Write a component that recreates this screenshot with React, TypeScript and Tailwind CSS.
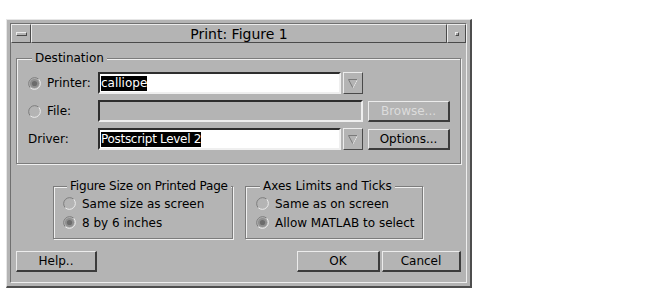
import React from 'react';

const raised =
  'border-t border-l border-t-[#ececec] border-l-[#ececec] border-b-2 border-r-2 border-b-[#3c3c3c] border-r-[#3c3c3c]';
const raisedThin =
  'border border-t-[#ececec] border-l-[#ececec] border-b-[#4a4a4a] border-r-[#4a4a4a]';
const sunken =
  'border-t-2 border-l-2 border-b-2 border-r-2 border-t-[#2e2e2e] border-l-[#2e2e2e] border-b-[#efefef] border-r-[#efefef]';
const etched =
  'border border-[#7c7c7c] shadow-[inset_1px_1px_0_#f0f0f0,1px_1px_0_#f0f0f0]';

function Radio({ checked }: { checked?: boolean }) {
  return (
    <svg width="13" height="13" viewBox="0 0 13 13" className="shrink-0">
      <path d="M2.26 10.74 A6 6 0 0 1 10.74 2.26" fill="none" stroke="#7d7d7d" />
      <path d="M10.74 2.26 A6 6 0 0 1 2.26 10.74" fill="none" stroke="#ececec" />
      {checked && (
        <>
          <circle cx="6.5" cy="6.5" r="4.6" fill="#8f8f8f" />
          <circle cx="6.5" cy="6.5" r="2.6" fill="#6c6c6c" />
        </>
      )}
    </svg>
  );
}

function DropButton() {
  return (
    <div className={`w-[20px] h-[22px] ${raisedThin} flex items-center justify-center shrink-0`}>
      <svg width="12" height="11" viewBox="0 0 12 11">
        <path d="M10.5 1.5 L6 10 L1.5 1.5 Z" fill="none" stroke="#7a7a7a" />
        <path d="M10.5 1.5 L6 10" fill="none" stroke="#eeeeee" />
      </svg>
    </div>
  );
}

function Button({ label, w, disabled }: { label: string; w: string; disabled?: boolean }) {
  return (
    <div
      className={`${w} h-[21px] ${raised} flex items-center justify-center text-[12px] leading-[14px] ${
        disabled ? 'text-[#dcdcdc]' : 'text-black'
      }`}
    >
      {label}
    </div>
  );
}

export default function App() {
  return (
    <div className="w-[651px] h-[290px] bg-white pt-[19px] pl-[6px] font-['DejaVu_Sans',sans-serif] text-black">
      {/* window frame */}
      <div className="w-[466px] h-[269px] bg-[#b4b4b4] border-t border-l border-t-[#e6e6e6] border-l-[#e6e6e6] border-b-2 border-r-2 border-b-[#4e4e4e] border-r-[#4e4e4e] p-[3px]">
        <div className="h-full flex flex-col border border-t-[#707070] border-l-[#707070] border-b-[#eeeeee] border-r-[#eeeeee]">
          {/* title bar */}
          <div className="flex h-[19px] shrink-0">
            <div className={`w-[20px] ${raisedThin} flex items-center justify-center`}>
              <div className={`w-[11px] h-[4px] ${raisedThin}`} />
            </div>
            <div className={`flex-1 ${raisedThin} flex items-center justify-center text-[14px] leading-[16px]`}>
              Print: Figure 1
            </div>
            <div className={`w-[19px] ${raisedThin} flex items-center justify-center`}>
              <div className={`w-[4px] h-[4px] ${raisedThin} bg-[#a0a0a0]`} />
            </div>
          </div>

          <div className="flex flex-col px-[5px] text-[12px] leading-[14px]">
            {/* Destination */}
            <fieldset className={`mt-[8px] ${etched} pl-[11px] pr-[10px] pt-[7px] pb-[13px]`}>
              <legend className="ml-[4px] px-[3px] bg-[#b4b4b4] leading-[14px]">Destination</legend>
              <div className="flex flex-col gap-[6px]">
                <div className="flex items-center h-[22px]">
                  <div className="w-[70px] flex items-center gap-[6px]">
                    <Radio checked />
                    <span>Printer:</span>
                  </div>
                  <div className={`w-[243px] h-[22px] ${sunken} bg-white flex items-center pl-[1px]`}>
                    <span className="bg-black text-white leading-[15px]">calliope</span>
                  </div>
                  <div className="ml-[2px]">
                    <DropButton />
                  </div>
                </div>
                <div className="flex items-center h-[22px]">
                  <div className="w-[70px] flex items-center gap-[6px]">
                    <Radio />
                    <span>File:</span>
                  </div>
                  <div className={`w-[265px] h-[22px] ${sunken} bg-[#b4b4b4]`} />
                  <div className="ml-[5px]">
                    <Button label="Browse..." w="w-[82px]" disabled />
                  </div>
                </div>
                <div className="flex items-center h-[22px]">
                  <div className="w-[70px] flex items-center">
                    <span>Driver:</span>
                  </div>
                  <div className={`w-[243px] h-[22px] ${sunken} bg-white flex items-center pl-[1px]`}>
                    <span className="bg-black text-white leading-[15px] tracking-[-0.3px]">Postscript Level 2</span>
                  </div>
                  <div className="ml-[2px]">
                    <DropButton />
                  </div>
                  <div className="ml-[5px]">
                    <Button label="Options..." w="w-[82px]" />
                  </div>
                </div>
              </div>
            </fieldset>

            {/* lower groups */}
            <div className="flex gap-[12px] pl-[37px] mt-[15px]">
              <fieldset className={`w-[180px] ${etched} pl-[9px] pt-[1px] pb-[6px]`}>
                <legend className="ml-[4px] px-[3px] bg-[#b4b4b4] leading-[14px] whitespace-nowrap tracking-[-0.2px]">
                  Figure Size on Printed Page
                </legend>
                <div className="flex items-center gap-[6px] h-[19px]">
                  <Radio />
                  <span>Same size as screen</span>
                </div>
                <div className="flex items-center gap-[6px] h-[19px]">
                  <Radio checked />
                  <span>8 by 6 inches</span>
                </div>
              </fieldset>
              <fieldset className={`w-[178px] ${etched} pl-[10px] pt-[1px] pb-[6px]`}>
                <legend className="ml-[4px] px-[3px] bg-[#b4b4b4] leading-[14px] whitespace-nowrap">
                  Axes Limits and Ticks
                </legend>
                <div className="flex items-center gap-[6px] h-[19px]">
                  <Radio />
                  <span>Same as on screen</span>
                </div>
                <div className="flex items-center gap-[6px] h-[19px]">
                  <Radio checked />
                  <span>Allow MATLAB to select</span>
                </div>
              </fieldset>
            </div>

            {/* buttons */}
            <div className="flex justify-between mt-[12px]">
              <Button label="Help.." w="w-[81px]" />
              <div className="flex gap-[2px]">
                <Button label="OK" w="w-[83px]" />
                <Button label="Cancel" w="w-[79px]" />
              </div>
            </div>
          </div>
        </div>
      </div>
    </div>
  );
}
